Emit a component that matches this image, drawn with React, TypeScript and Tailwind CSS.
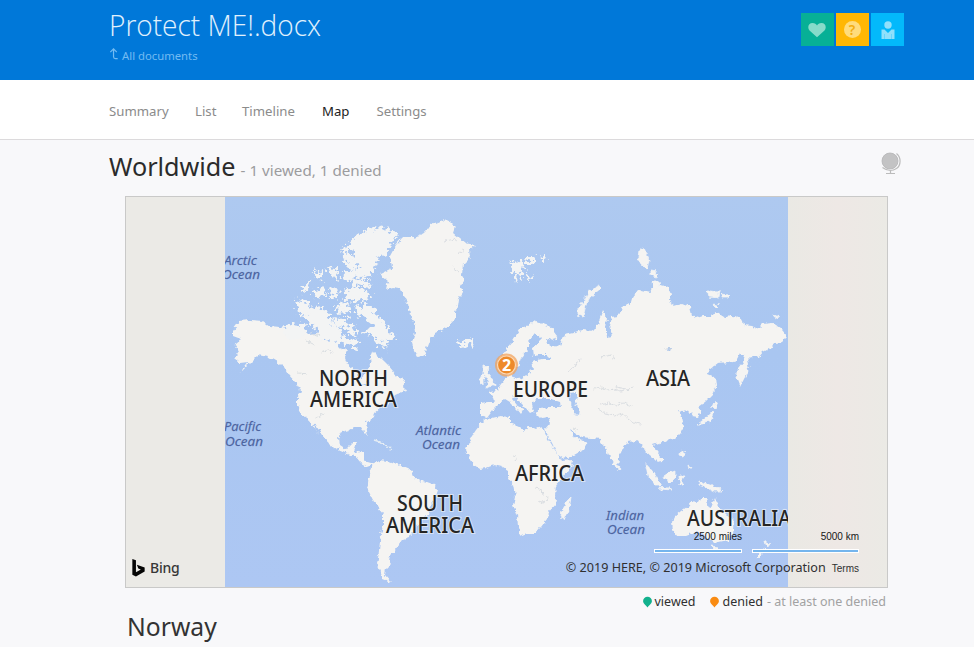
import type { ReactNode } from "react";

const tabs = [
  { name: "Summary", style: "w-[86px] text-[#8b8b8b]" },
  { name: "List", style: "w-[47px] text-[#8b8b8b]" },
  { name: "Timeline", style: "w-[80px] text-[#8b8b8b]" },
  { name: "Map", style: "w-[54.500px] text-[#222]" },
  { name: "Settings", style: "w-[60px] text-[#8b8b8b]" },
];

const continents = [
  // North and Central America
  "M233 330L240 321 250 320 263 321 270 326 280 327 287 329 294 325 302 328 308 334 318 333 323 340 334 341 340 348 347 350 345 358 348 366 356 371 360 379 366 374 371 367 370 357 372 352 379 356 384 361 388 365 393 371 397 377 405 380 403 386 406 391 398 393 390 399 387 404 380 408 374 413 373 418 366 423 367 431 368 436 364 432 361 427 354 427 349 430 342 432 339 438 340 445 346 449 352 443 357 443 354 451 364 453 364 460 371 462 375 464 368 467 361 463 356 457 345 453 336 449 331 446 328 441 322 434 316 426 313 424 318 434 314 428 309 420 302 415 298 406 298 397 300 390 295 382 289 375 284 367 277 362 268 357 258 355 250 363 240 373 248 362 240 363 234 358 239 351 235 344 241 339 233 336Z",
  // Greenland
  "M442 220L450 222 455 227 453 233 459 238 465 243 475 245 469 250 470 257 463 264 462 275 464 281 460 287 463 292 459 299 458 306 455 312 455 319 449 326 442 330 436 333 430 340 427 348 425 355 418 357 414 350 412 342 415 333 414 322 410 315 408 304 403 296 400 288 393 287 386 289 388 281 380 274 392 268 390 256 396 245 402 238 412 238 420 236 425 232 430 225Z",
  // South America
  "M373 464L378 460 388 461 397 464 407 468 413 473 415 479 426 482 434 485 438 490 435 499 430 507 428 515 420 522 414 529 409 537 403 539 398 545 395 551 390 555 389 561 391 564 386 569 385 575 391 582 383 579 380 571 377 563 379 551 380 540 383 525 383 513 378 507 373 500 367 488 369 483 370 473Z",
  // Africa
  "M484 420L492 418 501 416 510 417 510 423 519 427 524 431 528 426 535 429 543 427 547 437 552 445 558 455 561 461 573 460 571 467 563 477 556 486 555 496 557 502 548 512 547 519 540 528 535 534 527 534 522 536 518 525 517 516 513 505 515 496 513 485 508 477 508 470 503 467 494 465 486 468 480 469 474 465 470 458 466 450 470 439 476 430Z",
  // Eurasia
  "M499 358L505 350 512 342 520 329 528 325 533 321 542 324 551 327 557 335 553 341 546 338 546 342 553 347 560 345 565 334 574 332 583 330 590 331 597 327 600 318 603 310 607 317 606 330 607 337 612 336 609 326 611 317 618 316 622 307 631 302 633 295 641 290 650 292 653 286 661 285 669 287 671 296 668 301 675 306 682 304 690 307 692 315 697 318 703 316 711 316 717 312 725 317 734 316 743 320 744 325 752 326 758 329 763 324 772 323 781 329 788 337 783 342 774 343 771 348 763 352 759 357 752 356 747 361 749 369 744 379 740 387 736 377 737 369 743 362 745 355 740 354 737 360 729 362 718 363 709 370 708 374 715 377 716 386 712 395 706 401 698 407 701 412 698 417 692 416 688 410 683 411 678 410 682 417 684 426 680 433 674 439 665 441 659 443 653 445 657 451 663 458 663 461 657 462 651 456 646 452 641 444 636 441 628 442 622 450 619 458 618 468 613 464 608 453 603 444 600 439 592 438 582 437 576 433 570 429 574 437 579 439 587 443 583 450 574 455 564 459 558 455 552 443 545 430 550 424 549 417 541 418 536 413 539 408 550 407 561 407 560 402 551 399 542 399 536 399 532 404 534 411 530 413 525 407 519 401 514 396 512 399 517 405 524 409 521 414 517 409 510 402 505 399 500 403 493 410 487 418 480 416 480 403 488 402 494 402 492 395 488 392 497 390 501 384 506 378 507 371 513 371 512 377 520 379 529 374 533 367 532 361 541 359 552 359 547 354 537 354 534 357 533 348 540 342 539 335 534 335 528 342 528 350 521 358 518 367 514 366 511 361 504 366 498 365Z",
  // Australia
  "M675 516L681 511 687 507 692 501 699 502 701 498 708 498 706 505 711 507 715 497 718 506 727 515 734 520 733 531 728 541 719 543 712 541 703 534 697 532 686 536 677 536 673 530 672 522Z",
];

const arcticIslands = [
  "M347 248L355 238 365 231 378 227 390 230 397 236 390 243 387 252 378 259 370 275 362 279 354 272 361 267 351 261 357 252Z",
  "M297 304L301 299 307 303 311 307 307 315 299 314Z",
  "M309 311L320 306 328 313 333 325 326 330 318 328 311 325 306 318Z",
  "M302 288L310 281 308 289 302 292ZM314 292L324 287 326 294 317 297ZM328 268L336 269 338 278 331 276ZM345 247L351 257 356 269 350 271 345 261 342 251ZM345 271L356 273 353 281 344 279ZM330 288L339 290 337 297 330 297ZM354 280L370 281 368 287 354 285ZM345 290L355 288 369 293 367 300 347 299ZM314 272L323 273 318 279ZM336 305L341 303 343 313 338 313ZM344 303L350 304 347 315 342 312Z",
  "M356 308L367 304 375 311 381 320 389 331 395 339 389 342 383 338 387 349 380 345 374 335 365 333 373 325 364 317 358 314Z",
  "M319 329L332 325 341 332 346 342 337 344 326 341 318 336ZM347 337L358 342 356 348 346 344ZM333 318L347 319 345 328 335 326ZM282 330L291 325 306 326 304 335 290 340ZM346 324L354 326 357 334 349 333Z",
  "M458 341L462 343 467 338 472 341 470 346 462 347 459 345Z",
  "M511 264L519 261 524 267 519 273 518 282 514 275ZM526 260L535 257 533 264 527 265ZM526 275L531 277 528 280ZM542 257L546 258 543 260Z",
];

const islands = [
  "M484 366L489 367 488 374 493 380 495 385 487 388 488 380 484 375ZM479 378L484 375 484 383 479 384Z",
  "M578 315L578 308 585 300 589 291 600 286 600 289 590 297 586 305 583 317Z",
  "M639 250L644 248 649 260 647 269 641 264 638 258ZM651 270L657 271 656 277 651 275ZM652 281L658 281 659 288 653 289Z",
  "M708 291L719 292 718 298 709 297ZM722 294L729 295 727 298 722 298ZM713 304L719 305 716 308ZM774 315L779 317 776 319Z",
  "M571 497L569 510 565 519 561 517 563 507Z",
  "M645 463L654 473 661 485 655 485 648 476ZM664 476L670 472 675 470 675 479 671 483 666 480ZM659 487L669 488 672 490 660 489ZM679 476L685 476 682 480 684 484 680 484ZM681 450L685 453 683 457 680 456ZM688 465L691 467 689 470ZM699 481L708 484 717 487 723 491 714 491 706 487 699 485ZM617 464L620 468 618 471Z",
  "M715 400L718 402 715 408 712 407ZM698 424L706 418 712 411 714 414 711 420 702 424ZM765 541L770 544 767 548ZM765 549L761 556 757 558 762 551ZM711 546L718 547 715 550Z",
];

const details = [
  "M594 389l7-2 6 3 8-1 5 2 9-2M598 408l8 6 9 2 8-2 10 8 8 2M600 405l9-2 7 3 7-3 10 3",
  "M612 390l6-3 9 2 7-1M602 357l8-2 4 5M664 348l7 0-3 4M568 371l6-4 3-5 5-3M513 456l4 1-2 3M535 488l7 2 1 5M538 503l8-2 2-4M298 373l9 1M315 418l10-5M321 353l7-3 5 3M307 341l8 4M311 333l9 3",
  "M445 241l9-2 5 4M458 253l6-4M452 267l7 5M573 428l4 2",
];

function Label({ x, y, w, size = 21, ocean = false, children }: {
  x: number; y: number; w: number; size?: number; ocean?: boolean; children: ReactNode;
}) {
  return (
    <text
      x={x}
      y={y}
      textLength={w}
      lengthAdjust="spacingAndGlyphs"
      fontSize={size}
      fontWeight={ocean ? 400 : 500}
      fontStyle={ocean ? "italic" : "normal"}
      fill={ocean ? "#4c64a0" : "#252525"}
      stroke={ocean ? "#4c64a0" : "#f8f8f5"}
      strokeOpacity={ocean ? 0.5 : 0.6}
      strokeWidth={ocean ? 0.3 : 2}
      paintOrder="stroke"
    >
      {children}
    </text>
  );
}

function WorldMap() {
  return (
    <svg className="block h-[390px] w-[563px] shrink-0" viewBox="225 197 563 390">
      <defs>
        <linearGradient id="sea" x1="0" y1="0" x2="0" y2="1">
          <stop offset="0" stopColor="#aec9f0" />
          <stop offset="0.4" stopColor="#a9c6f1" />
          <stop offset="1" stopColor="#adc7f3" />
        </linearGradient>
        <filter id="coast" x="-5%" y="-5%" width="110%" height="110%" colorInterpolationFilters="sRGB">
          <feTurbulence type="fractalNoise" baseFrequency="0.22" numOctaves="2" seed="8" result="noise" />
          <feDisplacementMap in="SourceGraphic" in2="noise" scale="6" xChannelSelector="R" yChannelSelector="G" />
          <feGaussianBlur stdDeviation="0.5" />
        </filter>
        <filter id="fjords" x="-5%" y="-5%" width="110%" height="110%" colorInterpolationFilters="sRGB">
          <feTurbulence type="fractalNoise" baseFrequency="0.25" numOctaves="3" seed="3" result="noise" />
          <feDisplacementMap in="SourceGraphic" in2="noise" scale="14" xChannelSelector="R" yChannelSelector="G" />
          <feGaussianBlur stdDeviation="0.6" />
        </filter>
      </defs>
      <rect x="225" y="197" width="563" height="390" fill="url(#sea)" />
      <g fill="#f5f4f2" filter="url(#coast)">
        {continents.map((d) => <path key={d} d={d} />)}
        {islands.map((d) => <path key={d} d={d} stroke="#f1f3f4" strokeWidth="0.8" />)}
        <path d="M374 440l6 2 7 5M387 448l6 1" stroke="#e4ecf4" strokeWidth="1.5" fill="none" />
      </g>
      <g fill="#f3f4f4" stroke="#f3f4f4" strokeWidth="1.4" filter="url(#fjords)">
        {arcticIslands.map((d) => <path key={d} d={d} />)}
      </g>
      <g fill="#abc7f1" filter="url(#coast)">
        <path d="M571 393l6-1 0 5-2 4 5 8-1 6-5-1-2-8-4-8zM668 347l3 0-1 5-3 0zM363 384l5-2 3 3-6 1z" />
      </g>
      <g fill="none" stroke="#d2d7dc" strokeWidth="0.8" filter="url(#coast)">
        {details.map((d) => <path key={d} d={d} />)}
      </g>

      <g fontFamily="'Noto Sans', 'Open Sans', sans-serif">
        <Label x={319} y={385.5} w={69}>NORTH</Label>
        <Label x={310} y={407} w={87}>AMERICA</Label>
        <Label x={397} y={511} w={66}>SOUTH</Label>
        <Label x={386} y={532.5} w={88}>AMERICA</Label>
        <Label x={513} y={397} w={75}>EUROPE</Label>
        <Label x={646} y={386} w={44}>ASIA</Label>
        <Label x={515} y={481} w={69}>AFRICA</Label>
        <Label x={687} y={526} w={104}>AUSTRALIA</Label>
        <Label ocean size={13} x={224} y={265} w={33}>Arctic</Label>
        <Label ocean size={13} x={222} y={279} w={38}>Ocean</Label>
        <Label ocean size={13} x={224} y={431} w={37}>Pacific</Label>
        <Label ocean size={13} x={225} y={445.5} w={38}>Ocean</Label>
        <Label ocean size={13} x={416} y={435} w={45}>Atlantic</Label>
        <Label ocean size={13} x={422} y={449} w={38}>Ocean</Label>
        <Label ocean size={13} x={606} y={519.5} w={38}>Indian</Label>
        <Label ocean size={13} x={607} y={534} w={38}>Ocean</Label>
        <circle cx="506.500" cy="365" r="11.500" fill="#f2a35c" fillOpacity="0.75" />
        <circle cx="506.500" cy="365" r="9" fill="#ee8a2a" stroke="#fbd9b5" strokeWidth="1.200" />
        <text x="506.500" y="371" textAnchor="middle" fontSize="16" fontWeight="700" fill="#fff">2</text>
      </g>
    </svg>
  );
}

function Pin({ color }: { color: string }) {
  return (
    <svg className="mr-[3px] h-3 w-[9px]" viewBox="0 0 9 12">
      <path d="M4.500.8A4.300 4.300 0 0 0 .1 5c0 2.700 2.600 3.800 4.400 6.500C6.300 8.800 8.900 7.700 8.900 5A4.300 4.300 0 0 0 4.500.8Z" fill={color} />
    </svg>
  );
}

export default function App() {
  return (
    <div className="h-[647px] w-[974px] overflow-hidden bg-[#f8f8fa] font-['Noto_Sans','Open_Sans',sans-serif]">
      <header className="flex h-20 justify-between bg-[#0078d9] pr-[70px] pl-[109px] text-[#d4eafb]">
        <div>
          <h1 className="mt-[6px] h-10 font-['Open_Sans',sans-serif] text-[28px] leading-10 font-light whitespace-nowrap">
            <svg className="h-10 w-[216px] overflow-visible" viewBox="0 0 216 40">
              <text x="0" y="30" fontSize="29" fontWeight="300" fill="#e0f1fd" textLength="212" lengthAdjust="spacingAndGlyphs">Protect ME!.docx</text>
            </svg>
          </h1>
          <a className="flex h-5 items-center text-[11.300px] text-[#73bbf2]">
            <svg className="mr-[3px] mb-1 h-[12px] w-[10px]" viewBox="0 0 10 13" fill="none" stroke="currentColor" strokeWidth="1.300">
              <path d="M1 4.500 4.500 1 8 4.500M4.500 1v8.500Q4.500 11.500 6.500 11.500H9" />
            </svg>
            <span>All documents</span>
          </a>
        </div>
        <div className="mt-[13px] flex h-[33px] gap-[2px]">
          <div className="flex w-[33px] items-center justify-center bg-[#07b096]">
            <svg className="mr-px h-4 w-[18px]" viewBox="0 0 18 16">
              <path d="M9 15.300 1.500 8.500C-1 5.500.5 1 4.500 1 6.800 1 8.200 2 9 3.500 9.800 2 11.200 1 13.500 1c4 0 5.500 4.500 3 7.500Z" fill="#87dbca" />
            </svg>
          </div>
          <div className="flex w-[33px] items-center justify-center bg-[#ffb704]">
            <span className="mr-px flex size-[17px] items-center justify-center rounded-full bg-[#ffdc7c] text-[14px] leading-4 font-semibold text-[#f3ac10]">?</span>
          </div>
          <div className="flex w-[33px] items-center justify-center bg-[#03b9fb]">
            <svg className="h-[18px] w-[14px]" viewBox="0 0 14 18" fill="#90e0fb">
              <circle cx="7" cy="4" r="3.700" />
              <path d="M.5 8.500h3L7 12l3.500-3.500h3V18H.5Z" />
              <path d="M3.500 13v5M10.500 13v5" stroke="#5dd0fb" strokeWidth=".8" />
            </svg>
          </div>
        </div>
      </header>

      <nav className="flex h-[60px] items-center border-b border-[#dcdadc] bg-white pt-[5px] pl-[109px] text-[13.200px]">
        {tabs.map((tab) => (
          <a key={tab.name} className={tab.style}>{tab.name}</a>
        ))}
      </nav>

      <main>
        <div className="flex h-14 items-start justify-between pr-[72px] pl-[109px]">
          <h2 className="flex items-baseline pt-[8px] text-[25.200px] leading-9 text-[#2b2b2b]">
            Worldwide
            <span className="ml-[5px] text-[15.200px] text-[#9c9c9e]">- 1 viewed, 1 denied</span>
          </h2>
          <svg className="mt-3 h-[23px] w-[21px]" viewBox="0 0 21 23" fill="none" stroke="#bbb" strokeWidth="1.200">
            <circle cx="9" cy="9" r="8" fill="#c3c3c4" stroke="#b4b4b5" strokeWidth=".8" />
            <path d="M15.500 1.500c5 4 4.500 12 0 15s-10 2-14-1M9.500 18v3M5 21.500h9" />
          </svg>
        </div>

        <section className="relative ml-[125px] flex h-[392px] w-[763px] border border-[#c9c9c8] bg-[#ebeae6]">
          <div className="w-[99px] shrink-0" />
          <WorldMap />
          <div className="grow bg-linear-to-r from-[#eae9e4] via-[#eee8e5] to-[#ebeae5]" />
          <div className="absolute bottom-[9px] left-[6px] flex items-center text-[#373737]">
            <svg className="mr-[5px] h-[18px] w-[13px]" viewBox="0 0 13 19">
              <path d="M0 0 3.800 1.400V14L9 11.200 6.300 10 4.800 6.100 13 8.900v4.300L3.800 18.500 0 16.500Z" fill="#050505" />
            </svg>
            <span className="text-[14px] leading-5 font-medium tracking-[-0.200px]">Bing</span>
          </div>
          <div className="absolute right-[28px] bottom-[34px] flex gap-[10px] text-right font-['Liberation_Sans',Arial,sans-serif] text-[10px] leading-3 text-[#161616]">
            <div className="w-[88px]">
              2500 miles
              <div className="mt-[6px] h-[4px] border border-white bg-[#75b5ed]" />
            </div>
            <div className="w-[107px]">
              5000 km
              <div className="mt-[6px] h-[4px] border border-white bg-[#75b5ed]" />
            </div>
          </div>
          <div className="absolute right-[28px] bottom-[9px] flex items-baseline gap-[6px] whitespace-nowrap text-[#303030]">
            <span className="text-[12.600px] leading-5">© 2019 HERE, © 2019 Microsoft Corporation</span>
            <span className="font-['Liberation_Sans',Arial,sans-serif] text-[10px]">Terms</span>
          </div>
        </section>

        <div className="mr-[88px] flex h-[28px] items-center justify-end text-[12.500px] text-[#303030]">
          <Pin color="#13b18d" />
          <span className="mr-[15px]">viewed</span>
          <Pin color="#f98b12" />
          <span>denied</span>
          <span className="ml-1 text-[#a2a2a2]">- at least one denied</span>
        </div>
        <h2 className="-mt-px ml-[127px] text-[24.700px] leading-[24px] text-[#333]">Norway</h2>
      </main>
    </div>
  );
}
